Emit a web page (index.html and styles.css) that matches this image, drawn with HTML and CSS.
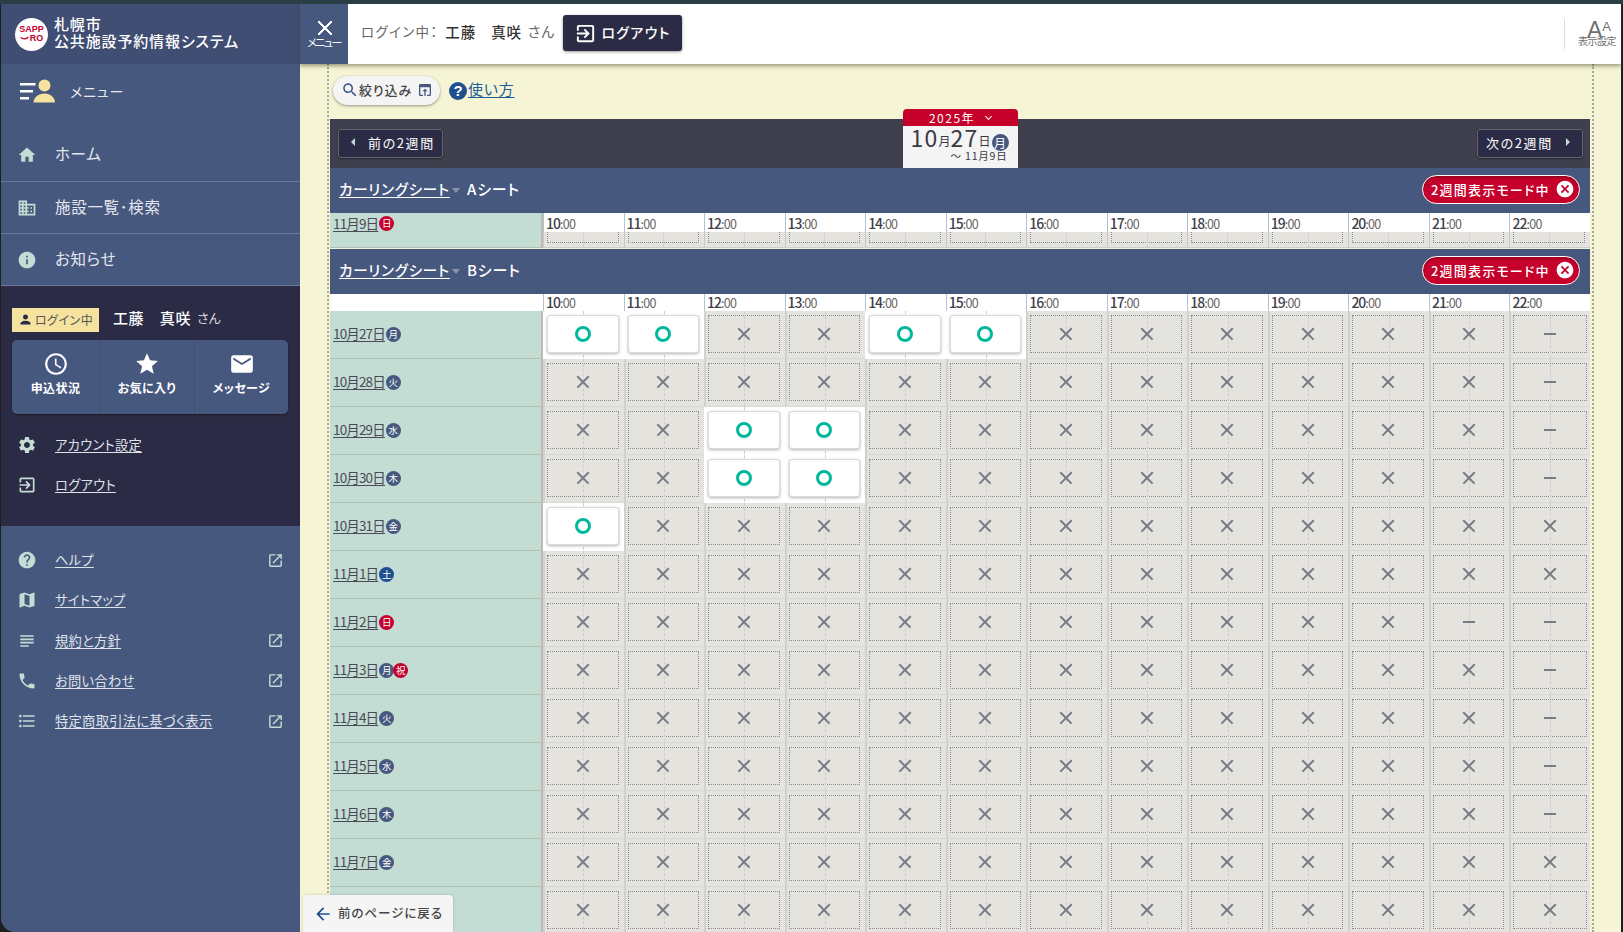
FILE: index.html
```html
<!DOCTYPE html>
<html lang="ja">
<head>
<meta charset="utf-8">
<title>札幌市 公共施設予約情報システム</title>
<link rel="stylesheet" href="styles.css">
</head>
<body>
<svg class="sprite" aria-hidden="true">
<symbol id="home" viewBox="0 0 24 24"><path d="M10 20v-6h4v6h5v-8h3L12 3 2 12h3v8z"/></symbol>
<symbol id="domain" viewBox="0 0 24 24"><path d="M12 7V3H2v18h20V7H12zM6 19H4v-2h2v2zm0-4H4v-2h2v2zm0-4H4V9h2v2zm0-4H4V5h2v2zm4 12H8v-2h2v2zm0-4H8v-2h2v2zm0-4H8V9h2v2zm0-4H8V5h2v2zm10 12h-8v-2h2v-2h-2v-2h2v-2h-2V9h8v10zm-2-8h-2v2h2v-2zm0 4h-2v2h2v-2z"/></symbol>
<symbol id="info" viewBox="0 0 24 24"><path d="M12 2C6.48 2 2 6.48 2 12s4.48 10 10 10 10-4.48 10-10S17.52 2 12 2zm1 15h-2v-6h2v6zm0-8h-2V7h2v2z"/></symbol>
<symbol id="person" viewBox="0 0 24 24"><path d="M12 12c2.21 0 4-1.79 4-4s-1.79-4-4-4-4 1.79-4 4 1.79 4 4 4zm0 2c-2.67 0-8 1.34-8 4v2h16v-2c0-2.66-5.33-4-8-4z"/></symbol>
<symbol id="clock" viewBox="0 0 24 24"><path d="M11.99 2C6.47 2 2 6.48 2 12s4.47 10 9.99 10C17.52 22 22 17.52 22 12S17.52 2 11.99 2zM12 20c-4.42 0-8-3.58-8-8s3.58-8 8-8 8 3.58 8 8-3.58 8-8 8zm.5-13H11v6l5.25 3.15.75-1.23-4.5-2.67z"/></symbol>
<symbol id="star" viewBox="0 0 24 24"><path d="M12 17.27L18.18 21l-1.64-7.03L22 9.24l-7.19-.61L12 2 9.19 8.63 2 9.24l5.46 4.73L5.82 21z"/></symbol>
<symbol id="mail" viewBox="0 0 24 24"><path d="M20 4H4c-1.1 0-1.99.9-1.99 2L2 18c0 1.1.9 2 2 2h16c1.1 0 2-.9 2-2V6c0-1.1-.9-2-2-2zm0 4l-8 5-8-5V6l8 5 8-5v2z"/></symbol>
<symbol id="gear" viewBox="0 0 24 24"><path d="M19.14 12.94c.04-.3.06-.61.06-.94 0-.32-.02-.64-.07-.94l2.03-1.58c.18-.14.23-.41.12-.61l-1.92-3.32c-.12-.22-.37-.29-.59-.22l-2.39.96c-.5-.38-1.03-.7-1.62-.94l-.36-2.54c-.04-.24-.24-.41-.48-.41h-3.84c-.24 0-.43.17-.47.41l-.36 2.54c-.59.24-1.13.57-1.62.94l-2.39-.96c-.22-.08-.47 0-.59.22L2.74 8.87c-.12.21-.08.47.12.61l2.03 1.58c-.05.3-.09.63-.09.94s.02.64.07.94l-2.03 1.58c-.18.14-.23.41-.12.61l1.92 3.32c.12.22.37.29.59.22l2.39-.96c.5.38 1.03.7 1.62.94l.36 2.54c.05.24.24.41.48.41h3.84c.24 0 .44-.17.47-.41l.36-2.54c.59-.24 1.13-.56 1.62-.94l2.39.96c.22.08.47 0 .59-.22l1.92-3.32c.12-.22.07-.47-.12-.61l-2.01-1.58zM12 15.6c-1.98 0-3.6-1.62-3.6-3.6s1.62-3.6 3.6-3.6 3.6 1.62 3.6 3.6-1.62 3.6-3.6 3.6z"/></symbol>
<symbol id="logout" viewBox="0 0 24 24"><path d="M10.09 15.59L11.5 17l5-5-5-5-1.41 1.41L12.67 11H3v2h9.67l-2.58 2.59zM19 3H5c-1.11 0-2 .9-2 2v4h2V5h14v14H5v-4H3v4c0 1.1.89 2 2 2h14c1.1 0 2-.9 2-2V5c0-1.1-.9-2-2-2z"/></symbol>
<symbol id="help" viewBox="0 0 24 24"><path d="M12 2C6.48 2 2 6.48 2 12s4.48 10 10 10 10-4.48 10-10S17.52 2 12 2zm1 17h-2v-2h2v2zm2.07-7.75l-.9.92C13.45 12.9 13 13.5 13 15h-2v-.5c0-1.1.45-2.1 1.17-2.83l1.24-1.26c.37-.36.59-.86.59-1.41 0-1.1-.9-2-2-2s-2 .9-2 2H8c0-2.21 1.79-4 4-4s4 1.79 4 4c0 .88-.36 1.68-.93 2.25z"/></symbol>
<symbol id="map" viewBox="0 0 24 24"><path d="M20.5 3l-.16.03L15 5.1 9 3 3.36 4.9c-.21.07-.36.25-.36.48V20.5c0 .28.22.5.5.5l.16-.03L9 18.9l6 2.1 5.64-1.9c.21-.07.36-.25.36-.48V3.5c0-.28-.22-.5-.5-.5zM15 19l-6-2.11V5l6 2.11V19z"/></symbol>
<symbol id="subject" viewBox="0 0 24 24"><path d="M14 17H4v2h10v-2zm6-8H4v2h16V9zM4 15h16v-2H4v2zM4 5v2h16V5H4z"/></symbol>
<symbol id="phone" viewBox="0 0 24 24"><path d="M6.62 10.79c1.44 2.83 3.76 5.14 6.59 6.59l2.2-2.2c.27-.27.67-.36 1.02-.24 1.12.37 2.33.57 3.57.57.55 0 1 .45 1 1V20c0 .55-.45 1-1 1-9.39 0-17-7.61-17-17 0-.55.45-1 1-1h3.5c.55 0 1 .45 1 1 0 1.25.2 2.45.57 3.57.11.35.03.74-.25 1.02l-2.2 2.2z"/></symbol>
<symbol id="list" viewBox="0 0 24 24"><path d="M4 10.5c-.83 0-1.5.67-1.5 1.5s.67 1.5 1.5 1.5 1.5-.67 1.5-1.5-.67-1.5-1.5-1.5zm0-6c-.83 0-1.5.67-1.5 1.5S3.17 7.5 4 7.5 5.5 6.83 5.5 6 4.83 4.5 4 4.5zm0 12c-.83 0-1.5.68-1.5 1.5s.68 1.5 1.5 1.5 1.5-.68 1.5-1.5-.67-1.5-1.5-1.5zM7 19h14v-2H7v2zm0-6h14v-2H7v2zm0-8v2h14V5H7z"/></symbol>
<symbol id="open" viewBox="0 0 24 24"><path d="M19 19H5V5h7V3H5c-1.11 0-2 .9-2 2v14c0 1.1.89 2 2 2h14c1.1 0 2-.9 2-2v-7h-2v7zM14 3v2h3.59l-9.83 9.83 1.41 1.41L19 6.41V10h2V3h-7z"/></symbol>
<symbol id="search" viewBox="0 0 24 24"><path d="M15.5 14h-.79l-.28-.27C15.41 12.59 16 11.11 16 9.5 16 5.91 13.09 3 9.5 3S3 5.91 3 9.5 5.91 16 9.5 16c1.61 0 3.09-.59 4.23-1.57l.27.28v.79l5 4.99L20.49 19l-4.99-5zm-6 0C7.01 14 5 11.99 5 9.5S7.01 5 9.5 5 14 7.01 14 9.5 11.99 14 9.5 14z"/></symbol>
<symbol id="back" viewBox="0 0 24 24"><path d="M20 11H7.83l5.59-5.59L12 4l-8 8 8 8 1.41-1.41L7.83 13H20v-2z"/></symbol>
<symbol id="cancel" viewBox="0 0 24 24"><path d="M12 2C6.47 2 2 6.47 2 12s4.47 10 10 10 10-4.47 10-10S17.53 2 12 2zm5 13.59L15.59 17 12 13.41 8.41 17 7 15.59 10.59 12 7 8.41 8.41 7 12 10.59 15.59 7 17 8.41 13.41 12 17 15.59z"/></symbol>
<symbol id="panel" viewBox="0 0 24 24"><path d="M19 3H5c-1.1 0-2 .9-2 2v14c0 1.1.9 2 2 2h4v-2H5V8h14v11h-4v2h4c1.1 0 2-.9 2-2V5c0-1.100-.9-2-2-2zm-7 7l-4 4h3v7h2v-7h3z"/></symbol>
</svg>

<div class="app">
  <aside class="side">
    <div class="brand">
      <div class="logo"><span>SAPP</span><span class="logo-2"><svg class="smile" viewBox="0 0 12 6"><path d="M1 1c2 3.500 7 3.500 10 0" fill="none" stroke="currentColor" stroke-width="1.600"/></svg>RO</span></div>
      <div class="brand-name">札幌市<br>公共施設予約情報システム</div>
    </div>
    <div class="side-title">
      <svg class="menu-ic" viewBox="0 0 35 24"><path fill="#fff" d="M0 4h15.500v2.500H0zM0 11h13v2.500H0zM0 18h9v2.500H0z"/><circle fill="#f5e29f" cx="24.500" cy="6.500" r="6"/><path fill="#f5e29f" d="M13.500 23.500c0-5 5-9 11-9s10.500 4 10.500 9z"/></svg>
      <span>メニュー</span>
    </div>
    <nav class="main-nav">
      <a class="main-link"><svg class="ic"><use href="#home"/></svg><span>ホーム</span></a>
      <a class="main-link"><svg class="ic"><use href="#domain"/></svg><span>施設一覧･検索</span></a>
      <a class="main-link"><svg class="ic"><use href="#info"/></svg><span>お知らせ</span></a>
    </nav>
    <section class="user">
      <div class="user-row">
        <span class="badge"><svg class="ic-s"><use href="#person"/></svg>ログイン中</span>
        <span class="user-name">工藤　真咲</span><span class="san">さん</span>
      </div>
      <div class="quick">
        <a class="quick-item"><svg class="ic-q"><use href="#clock"/></svg>申込状況</a>
        <a class="quick-item"><svg class="ic-q"><use href="#star"/></svg>お気に入り</a>
        <a class="quick-item"><svg class="ic-q"><use href="#mail"/></svg>メッセージ</a>
      </div>
      <ul class="links">
        <li><svg class="ic"><use href="#gear"/></svg><a>アカウント設定</a></li>
        <li><svg class="ic"><use href="#logout"/></svg><a>ログアウト</a></li>
      </ul>
    </section>
    <ul class="links foot">
      <li><svg class="ic"><use href="#help"/></svg><a>ヘルプ</a><svg class="ext"><use href="#open"/></svg></li>
      <li><svg class="ic"><use href="#map"/></svg><a>サイトマップ</a></li>
      <li><svg class="ic"><use href="#subject"/></svg><a>規約と方針</a><svg class="ext"><use href="#open"/></svg></li>
      <li><svg class="ic"><use href="#phone"/></svg><a>お問い合わせ</a><svg class="ext"><use href="#open"/></svg></li>
      <li><svg class="ic"><use href="#list"/></svg><a>特定商取引法に基づく表示</a><svg class="ext"><use href="#open"/></svg></li>
    </ul>
  </aside>

  <main class="main">
    <header class="top">
      <button class="close"><span class="close-x"></span><span class="close-t">メニュー</span></button>
      <div class="login"><span class="login-l">ログイン中：</span><b>工藤　真咲</b><span class="login-s">さん</span></div>
      <button class="logout"><svg class="ic-l"><use href="#logout"/></svg><span>ログアウト</span></button>
      <div class="display"><div class="aa"><span class="a1">A</span><span class="a2">A</span></div><div class="aa-t">表示設定</div></div>
    </header>
    <div class="scroll">
      <div class="inner">
        <div class="tools">
          <button class="filter"><svg class="ic-f"><use href="#search"/></svg><span>絞り込み</span><svg class="ic-p"><use href="#panel"/></svg></button>
          <span class="q">?</span><a class="howto">使い方</a>
        </div>
        <div class="bar">
          <button class="nav nav-prev"><i class="tri-l"></i>前の2週間</button>
          <div class="date">
            <div class="date-y">2025年<i class="chev"></i></div>
            <div class="date-d"><span class="dn">10</span><small>月</small><span class="dn">27</span><small>日</small><span class="wd big">月</span></div>
            <div class="date-e">～ 11月9日</div>
          </div>
          <button class="nav nav-next"><span>次の2週間</span><i class="tri-r"></i></button>
        </div>

        <div class="sec"><a>カーリングシート</a><i class="tri-d"></i><span class="sec-n">Aシート</span><button class="pill">2週間表示モード中<svg class="ic-c"><use href="#cancel"/></svg></button></div>
        <div class="grid partial">
          <div class="lbl span"><a>11月9日</a><span class="wd sun">日</span></div>
          <div class="t"><b>10</b>:00</div><div class="t"><b>11</b>:00</div><div class="t"><b>12</b>:00</div><div class="t"><b>13</b>:00</div><div class="t"><b>14</b>:00</div><div class="t"><b>15</b>:00</div><div class="t"><b>16</b>:00</div><div class="t"><b>17</b>:00</div><div class="t"><b>18</b>:00</div><div class="t"><b>19</b>:00</div><div class="t"><b>20</b>:00</div><div class="t"><b>21</b>:00</div><div class="t"><b>22</b>:00</div>
          <div class="stub"></div><div class="stub"></div><div class="stub"></div><div class="stub"></div><div class="stub"></div><div class="stub"></div><div class="stub"></div><div class="stub"></div><div class="stub"></div><div class="stub"></div><div class="stub"></div><div class="stub"></div><div class="stub"></div>
        </div>

        <div class="sec"><a>カーリングシート</a><i class="tri-d"></i><span class="sec-n">Bシート</span><button class="pill">2週間表示モード中<svg class="ic-c"><use href="#cancel"/></svg></button></div>
        <div class="grid">
          <div class="blank"></div>
          <div class="t"><b>10</b>:00</div><div class="t"><b>11</b>:00</div><div class="t"><b>12</b>:00</div><div class="t"><b>13</b>:00</div><div class="t"><b>14</b>:00</div><div class="t"><b>15</b>:00</div><div class="t"><b>16</b>:00</div><div class="t"><b>17</b>:00</div><div class="t"><b>18</b>:00</div><div class="t"><b>19</b>:00</div><div class="t"><b>20</b>:00</div><div class="t"><b>21</b>:00</div><div class="t"><b>22</b>:00</div>

          <div class="lbl"><a>10月27日</a><span class="wd">月</span></div>
          <div class="c o"><i></i></div><div class="c o"><i></i></div><div class="c x"><i></i></div><div class="c x"><i></i></div><div class="c o"><i></i></div><div class="c o"><i></i></div><div class="c x"><i></i></div><div class="c x"><i></i></div><div class="c x"><i></i></div><div class="c x"><i></i></div><div class="c x"><i></i></div><div class="c x"><i></i></div><div class="c d"><i></i></div>

          <div class="lbl"><a>10月28日</a><span class="wd">火</span></div>
          <div class="c x"><i></i></div><div class="c x"><i></i></div><div class="c x"><i></i></div><div class="c x"><i></i></div><div class="c x"><i></i></div><div class="c x"><i></i></div><div class="c x"><i></i></div><div class="c x"><i></i></div><div class="c x"><i></i></div><div class="c x"><i></i></div><div class="c x"><i></i></div><div class="c x"><i></i></div><div class="c d"><i></i></div>

          <div class="lbl"><a>10月29日</a><span class="wd">水</span></div>
          <div class="c x"><i></i></div><div class="c x"><i></i></div><div class="c o"><i></i></div><div class="c o"><i></i></div><div class="c x"><i></i></div><div class="c x"><i></i></div><div class="c x"><i></i></div><div class="c x"><i></i></div><div class="c x"><i></i></div><div class="c x"><i></i></div><div class="c x"><i></i></div><div class="c x"><i></i></div><div class="c d"><i></i></div>

          <div class="lbl"><a>10月30日</a><span class="wd">木</span></div>
          <div class="c x"><i></i></div><div class="c x"><i></i></div><div class="c o"><i></i></div><div class="c o"><i></i></div><div class="c x"><i></i></div><div class="c x"><i></i></div><div class="c x"><i></i></div><div class="c x"><i></i></div><div class="c x"><i></i></div><div class="c x"><i></i></div><div class="c x"><i></i></div><div class="c x"><i></i></div><div class="c d"><i></i></div>

          <div class="lbl"><a>10月31日</a><span class="wd">金</span></div>
          <div class="c o"><i></i></div><div class="c x"><i></i></div><div class="c x"><i></i></div><div class="c x"><i></i></div><div class="c x"><i></i></div><div class="c x"><i></i></div><div class="c x"><i></i></div><div class="c x"><i></i></div><div class="c x"><i></i></div><div class="c x"><i></i></div><div class="c x"><i></i></div><div class="c x"><i></i></div><div class="c x"><i></i></div>

          <div class="lbl"><a>11月1日</a><span class="wd sat">土</span></div>
          <div class="c x"><i></i></div><div class="c x"><i></i></div><div class="c x"><i></i></div><div class="c x"><i></i></div><div class="c x"><i></i></div><div class="c x"><i></i></div><div class="c x"><i></i></div><div class="c x"><i></i></div><div class="c x"><i></i></div><div class="c x"><i></i></div><div class="c x"><i></i></div><div class="c x"><i></i></div><div class="c x"><i></i></div>

          <div class="lbl"><a>11月2日</a><span class="wd sun">日</span></div>
          <div class="c x"><i></i></div><div class="c x"><i></i></div><div class="c x"><i></i></div><div class="c x"><i></i></div><div class="c x"><i></i></div><div class="c x"><i></i></div><div class="c x"><i></i></div><div class="c x"><i></i></div><div class="c x"><i></i></div><div class="c x"><i></i></div><div class="c x"><i></i></div><div class="c d"><i></i></div><div class="c d"><i></i></div>

          <div class="lbl"><a>11月3日</a><span class="wd">月</span><span class="wd sun hol">祝</span></div>
          <div class="c x"><i></i></div><div class="c x"><i></i></div><div class="c x"><i></i></div><div class="c x"><i></i></div><div class="c x"><i></i></div><div class="c x"><i></i></div><div class="c x"><i></i></div><div class="c x"><i></i></div><div class="c x"><i></i></div><div class="c x"><i></i></div><div class="c x"><i></i></div><div class="c x"><i></i></div><div class="c d"><i></i></div>

          <div class="lbl"><a>11月4日</a><span class="wd">火</span></div>
          <div class="c x"><i></i></div><div class="c x"><i></i></div><div class="c x"><i></i></div><div class="c x"><i></i></div><div class="c x"><i></i></div><div class="c x"><i></i></div><div class="c x"><i></i></div><div class="c x"><i></i></div><div class="c x"><i></i></div><div class="c x"><i></i></div><div class="c x"><i></i></div><div class="c x"><i></i></div><div class="c d"><i></i></div>

          <div class="lbl"><a>11月5日</a><span class="wd">水</span></div>
          <div class="c x"><i></i></div><div class="c x"><i></i></div><div class="c x"><i></i></div><div class="c x"><i></i></div><div class="c x"><i></i></div><div class="c x"><i></i></div><div class="c x"><i></i></div><div class="c x"><i></i></div><div class="c x"><i></i></div><div class="c x"><i></i></div><div class="c x"><i></i></div><div class="c x"><i></i></div><div class="c d"><i></i></div>

          <div class="lbl"><a>11月6日</a><span class="wd">木</span></div>
          <div class="c x"><i></i></div><div class="c x"><i></i></div><div class="c x"><i></i></div><div class="c x"><i></i></div><div class="c x"><i></i></div><div class="c x"><i></i></div><div class="c x"><i></i></div><div class="c x"><i></i></div><div class="c x"><i></i></div><div class="c x"><i></i></div><div class="c x"><i></i></div><div class="c x"><i></i></div><div class="c d"><i></i></div>

          <div class="lbl"><a>11月7日</a><span class="wd">金</span></div>
          <div class="c x"><i></i></div><div class="c x"><i></i></div><div class="c x"><i></i></div><div class="c x"><i></i></div><div class="c x"><i></i></div><div class="c x"><i></i></div><div class="c x"><i></i></div><div class="c x"><i></i></div><div class="c x"><i></i></div><div class="c x"><i></i></div><div class="c x"><i></i></div><div class="c x"><i></i></div><div class="c x"><i></i></div>

          <div class="lbl"></div>
          <div class="c x"><i></i></div><div class="c x"><i></i></div><div class="c x"><i></i></div><div class="c x"><i></i></div><div class="c x"><i></i></div><div class="c x"><i></i></div><div class="c x"><i></i></div><div class="c x"><i></i></div><div class="c x"><i></i></div><div class="c x"><i></i></div><div class="c x"><i></i></div><div class="c x"><i></i></div><div class="c x"><i></i></div>
        </div>
      </div>
      <a class="backbtn"><svg class="ic-b"><use href="#back"/></svg><span>前のページに戻る</span></a>
    </div>
  </main>
</div>
</body>
</html>
```
FILE: styles.css
```css
*, *::before, *::after { box-sizing: border-box; }
html, body { margin: 0; height: 100%; overflow: hidden; }
body {
  background: #2a3f46;
  font-family: "Noto Sans CJK JP", "Noto Sans", sans-serif;
  font-size: 14px;
  color: #444450;
  font-feature-settings: "palt";
}
button { font: inherit; font-feature-settings: inherit; border: 0; padding: 0; color: inherit; }
a { color: inherit; }
ul { list-style: none; margin: 0; padding: 0; }
svg { fill: currentColor; flex: none; display: block; }
.sprite { position: absolute; width: 0; height: 0; }

.app { display: flex; height: 932px; padding: 4px 2px 0 1px; background: linear-gradient(#2a3f46 4px, #1f1f1f 4px); }

/* sidebar */
.side { width: 299px; flex: none; display: flex; flex-direction: column; background: #47587f; color: #fff; border-bottom-left-radius: 14px; overflow: hidden; }
.brand { height: 60px; display: flex; align-items: center; gap: 6px; padding-left: 14px; background: #3f4e72; flex: none; }
.logo { width: 33px; height: 33px; border-radius: 50%; background: #fff; color: #c4002b; display: flex; flex-direction: column; align-items: center; justify-content: center; font: 700 9px/9px "Liberation Sans Narrow", "Liberation Sans", sans-serif; }
.logo-2 { display: flex; align-items: center; gap: 1px; }
.smile { width: 9px; height: 5px; }
.brand-name { font-size: 15px; line-height: 17px; font-weight: 500; letter-spacing: .85px; padding-bottom: 4px; }
.side-title { height: 56px; display: flex; align-items: center; padding-left: 19px; gap: 15px; font-size: 14px; color: #e6e8ee; letter-spacing: .9px; }
.side-title span { padding-bottom: 2px; }
.menu-ic { width: 35px; height: 24px; margin-top: -2px; }
.main-nav { padding-top: 8px; }
.main-link { height: 52px; display: flex; align-items: center; gap: 18px; padding-left: 16px; font-size: 15.500px; letter-spacing: .7px; color: #e4e7ee; border-bottom: 1px solid #6a7998; }
.main-link span { padding-bottom: 3px; }
.main-link:nth-child(1) { height: 54px; }
.ic { width: 20px; height: 20px; color: #c4ddd4; }
.user { background: #2b2b45; padding: 22px 12px 0 11px; height: 240px; flex: none; }
.user-row { display: flex; align-items: center; height: 24px; }
.badge { background: #f5e29f; color: #555; width: 87px; height: 24px; display: flex; align-items: center; justify-content: center; gap: 2px; padding-bottom: 2px; font-size: 12px; letter-spacing: .5px; }
.ic-s { width: 15px; height: 15px; color: #2b2b45; }
.user-name { margin-left: 14px; font-size: 15px; font-weight: 500; letter-spacing: .6px; padding-bottom: 5px; }
.san { margin-left: 6px; font-size: 13px; color: #d8d8df; padding-bottom: 5px; }
.quick { margin-top: 8px; height: 74px; display: flex; background: #47587f; border-radius: 5px; box-shadow: 0 1px 2px rgba(0,0,0,.4); }
.quick-item { display: flex; flex-direction: column; align-items: center; justify-content: center; gap: 2px; padding-bottom: 7px; font-size: 12px; font-weight: 700; letter-spacing: .4px; border-left: 1px solid #404f72; flex: 1; }
.quick-item:first-child { border-left: 0; flex: 0 0 87px; }
.quick-item:nth-child(2) { flex: 0 0 95px; }
.ic-q { width: 26px; height: 26px; }
.links { padding-top: 11px; }
.links li { height: 40px; display: flex; align-items: center; gap: 18px; padding: 0 6px 0 5px; }
.links a { font-size: 13.300px; color: #dfe2ea; text-decoration: underline; text-underline-offset: 2px; letter-spacing: .25px; margin-top: -2px; }
.foot { padding: 14px 10px 0 11px; }
.foot li { height: 40.250px; }
.foot a { margin-top: -1px; }
.ext { width: 17px; height: 17px; margin-left: auto; color: #c4ddd4; }

/* main */
.main { flex: 1; min-width: 0; display: flex; flex-direction: column; }
.top { height: 60px; flex: none; background: #fff; display: flex; align-items: center; box-shadow: 0 2px 4px rgba(60,60,30,.5); position: relative; z-index: 3; }
.close { width: 48px; height: 60px; background: #47587f; color: #fff; display: flex; flex-direction: column; align-items: center; justify-content: center; flex: none; }
.close-x { width: 14px; height: 14px; margin: 2px 0 0 1px; background:
  linear-gradient(45deg, transparent 46%, #fff 46%, #fff 54%, transparent 54%),
  linear-gradient(-45deg, transparent 46%, #fff 46%, #fff 54%, transparent 54%); }
.close-t { font-size: 11px; line-height: 14px; letter-spacing: -1.500px; }
.login { margin-left: 13px; display: flex; align-items: center; font-size: 13.500px; letter-spacing: 1.300px; padding-bottom: 6px; }
.login-l { color: #666; margin-right: 7px; }
.login b { font-weight: 500; color: #333; font-size: 14.500px; letter-spacing: .8px; }
.login-s { margin-left: 6px; color: #666; font-size: 14px; letter-spacing: .8px; }
.logout { margin: -2px 0 0 8px; width: 119px; height: 36px; background: #2b2b45; color: #fff; border-radius: 3px; display: flex; align-items: center; justify-content: center; gap: 4px; font-size: 14px; font-weight: 500; letter-spacing: 1.300px; box-shadow: 0 1px 3px rgba(0,0,0,.4); }
.logout span { padding-bottom: 2px; }
.ic-l { width: 23px; height: 23px; }
.display { margin-left: auto; width: 57px; height: 30px; border-left: 1px solid #ddd; padding: 3px 0 0 13px; color: #707070; }
.aa { display: flex; align-items: flex-start; height: 14px; padding-left: 9px; font-family: "Liberation Sans Narrow", "Liberation Sans", sans-serif; }
.a1 { font-size: 23px; line-height: 16px; }
.a2 { font-size: 13px; line-height: 10px; }
.aa-t { font-size: 10px; line-height: 10px; letter-spacing: -.5px; white-space: nowrap; }

.scroll { flex: 1; min-height: 0; background: #f5f5d5; position: relative; overflow: hidden; }
.inner { margin-left: 27px; width: 1267px; height: 100%; padding: 0 2px 0 1px; border-left: 2px dotted #a8a89a; border-right: 2px dotted #a8a89a; }
.tools { height: 55px; display: flex; align-items: center; padding: 0 0 2px 3px; }
.filter { width: 107px; height: 29px; border-radius: 15px; background: #f4f4f4; box-shadow: 0 1px 3px rgba(0,0,0,.4); display: flex; align-items: center; padding-left: 8px; font-size: 13px; font-weight: 500; letter-spacing: .9px; color: #444; }
.filter span { padding-bottom: 3px; }
.ic-f { width: 18px; height: 18px; color: #3a5484; margin: -2px 0 0 0; }
.ic-p { width: 16px; height: 16px; margin: -2px 0 0 5px; color: #47587f; }
.q { margin-left: 9px; width: 18px; height: 18px; border-radius: 50%; background: #1f4f8f; color: #fff; font: 700 15px/18px "Liberation Sans", sans-serif; text-align: center; }
.howto { margin-left: 1px; font-size: 15px; color: #1f5f99; text-decoration: underline; text-underline-offset: 2px; letter-spacing: .8px; padding-bottom: 5px; }

.bar { height: 49px; background: #403f4d; display: flex; align-items: center; justify-content: space-between; padding: 0 7px 0 8px; }
.nav { height: 29px; width: 105px; background: #2b2b45; border: 1px solid #62626f; border-radius: 3px; color: #fff; display: flex; align-items: center; padding-bottom: 3px; font-size: 13px; letter-spacing: 1.600px; box-shadow: 0 1px 2px rgba(0,0,0,.4); }
.nav-prev { padding-left: 12px; gap: 13px; }
.nav-next { width: 106px; padding-left: 8px; gap: 13px; }
.tri-l { width: 0; height: 0; border: 4px solid transparent; border-right: 4px solid #c4ddd4; border-left: 0; }
.tri-r { width: 0; height: 0; border: 4px solid transparent; border-left: 4px solid #c4ddd4; border-right: 0; }
.date { align-self: flex-end; width: 115px; height: 59px; background: #f4f4f4; border-radius: 4px 4px 0 0; overflow: hidden; color: #3a3a44; text-align: center; }
.date-y { height: 17px; background: #c4002b; color: #fff; font-size: 12px; line-height: 17px; letter-spacing: 1.500px; display: flex; align-items: center; justify-content: center; gap: 7px; }
.chev { width: 5px; height: 5px; border: solid #fff; border-width: 0 1px 1px 0; transform: rotate(45deg); margin: -3px 0 0 4px; }
.date-d { height: 24px; display: flex; align-items: center; justify-content: flex-end; padding-right: 9px; line-height: 1; margin-top: -1px; }
.dn { font-size: 23px; font-weight: 400; letter-spacing: 1.200px; }
.date-d small { font-size: 12px; margin-top: 8px; }
.date-e { font-size: 10.500px; line-height: 12px; text-align: right; padding-right: 10px; letter-spacing: .8px; margin-top: 1px; }
.wd.big { width: 17px; height: 17px; font-size: 12px; line-height: 17px; margin: 10px 0 0 1px; }

.sec { height: 45px; background: #47587f; color: #fff; display: flex; align-items: center; padding: 0 10px 3px 9px; font-size: 14.500px; font-weight: 500; letter-spacing: .8px; }
.sec a { text-decoration: underline; text-underline-offset: 2px; margin-top: -2px; }
.tri-d { width: 0; height: 0; border: 4.500px solid transparent; border-top: 5px solid #8a93a8; border-bottom: 0; margin: 2px 7px 0 2px; }
.sec-n { font-size: 15px; letter-spacing: .9px; margin-top: -2px; }
.pill { margin-left: auto; height: 29px; width: 158px; border: 1px solid #fff; border-radius: 15px; background: #c4002b; color: #fff; display: flex; align-items: center; padding: 0 4px 0 8px; font-size: 13px; font-weight: 500; letter-spacing: 1.200px; justify-content: space-between; box-shadow: inset 0 2px 2px rgba(0,0,0,.2); }
.ic-c { width: 20px; height: 20px; }

.grid { display: grid; grid-template-columns: 213px repeat(13, 1fr); grid-template-rows: 17px; grid-auto-rows: 48px; background: #e5e3de; }
.blank { background: #fff; height: 17px; }
.t { background: #fff; border-left: 1px solid #b4c2d8; padding-left: 2px; height: 17px; font-size: 12.500px; line-height: 17px; letter-spacing: -.7px; color: #666; white-space: nowrap; }
.t b { font-size: 14px; letter-spacing: -1px; font-weight: 500; color: #3f3f4c; }
.partial { grid-template-rows: 19px 16px; grid-auto-rows: 16px; margin-bottom: 1px; }
.partial > .t { height: 19px; line-height: 20px; }
.lbl { background: #c4ddd4; border-bottom: 1px solid #b4c0b2; border-right: 2px solid #bdbbb4; padding: 0 0 3px 3px; display: flex; align-items: center; font-size: 13.500px; color: #4a4a55; letter-spacing: -.85px; height: 48px; }
.lbl a { text-decoration: underline; text-underline-offset: 2px; }
.lbl.span { grid-row: span 2; height: 35px; align-items: flex-start; padding-top: 0; }
.wd { width: 15px; height: 15px; border-radius: 50%; background: #47587f; color: #fff; font-size: 9.500px; line-height: 15px; text-align: center; letter-spacing: 0; flex: none; margin-top: 3px; margin-left: 1px; }
.wd.sun { background: #c4002b; }
.wd.sat { background: #1f4f8f; }
.hol { margin-left: -1px; }
.stub { height: 16px; border-left: 1px solid #c9c7c1; background: #e5e3de; position: relative; border-bottom: 1px solid #d0cec8; }
.stub::before { content: ""; display: block; height: 11px; margin: 0 5px 0 3px; border: dotted #8a8a8a; border-width: 0 1px 1px 1px; }
.stub::after { content: ""; position: absolute; left: calc(50% - 1px); top: 0; bottom: 0; border-left: 1px dashed #d0cdd0; }

.c { position: relative; height: 48px; background: #e5e3de; border-left: 2px solid #d3d1cb; border-bottom: 1px solid #d9d7d2; padding: 4px 5px 5px 2px; display: flex; }
.c:nth-child(14n) { padding-right: 3px; }
.c::after { content: ""; position: absolute; left: calc(50% - 1px); top: 0; bottom: 0; border-left: 1px dashed #d0cdd0; }
.c i { position: relative; flex: 1; display: block; border: 1px dotted #8c8c8c; }
.c i::before, .c i::after { content: ""; position: absolute; left: 50%; top: 50%; background: #7a7984; z-index: 1; }
.x i::before, .x i::after { width: 16px; height: 1.800px; margin: -.9px 0 0 -8px; transform: rotate(45deg); }
.x i::after { transform: rotate(-45deg); }
.d i::before { width: 12px; height: 2px; margin: -1px 0 0 -6px; }
.d i::after { display: none; }
.o { background: #fff; border-left-color: #fff; border-bottom-color: #fff; }
.o i { background: #fff; border: 1px solid #dcdad4; border-radius: 3px; box-shadow: 0 1px 3px rgba(0,0,0,.3); z-index: 1; }
.o i::before { width: 16px; height: 16px; margin: -8px 0 0 -8px; background: transparent; border: 3.500px solid #00b89c; border-radius: 50%; }
.o i::after { display: none; }

.backbtn { position: absolute; left: 3px; bottom: 0; width: 150px; height: 37px; background: #f5f5f5; border-radius: 4px 4px 0 0; box-shadow: 0 0 3px rgba(0,0,0,.2); display: flex; align-items: center; padding-left: 10px; gap: 5px; font-size: 12.500px; font-weight: 500; letter-spacing: .95px; color: #444; z-index: 2; }
.backbtn span { padding-bottom: 3px; }
.ic-b { width: 20px; height: 20px; color: #1f4f8f; }
```
